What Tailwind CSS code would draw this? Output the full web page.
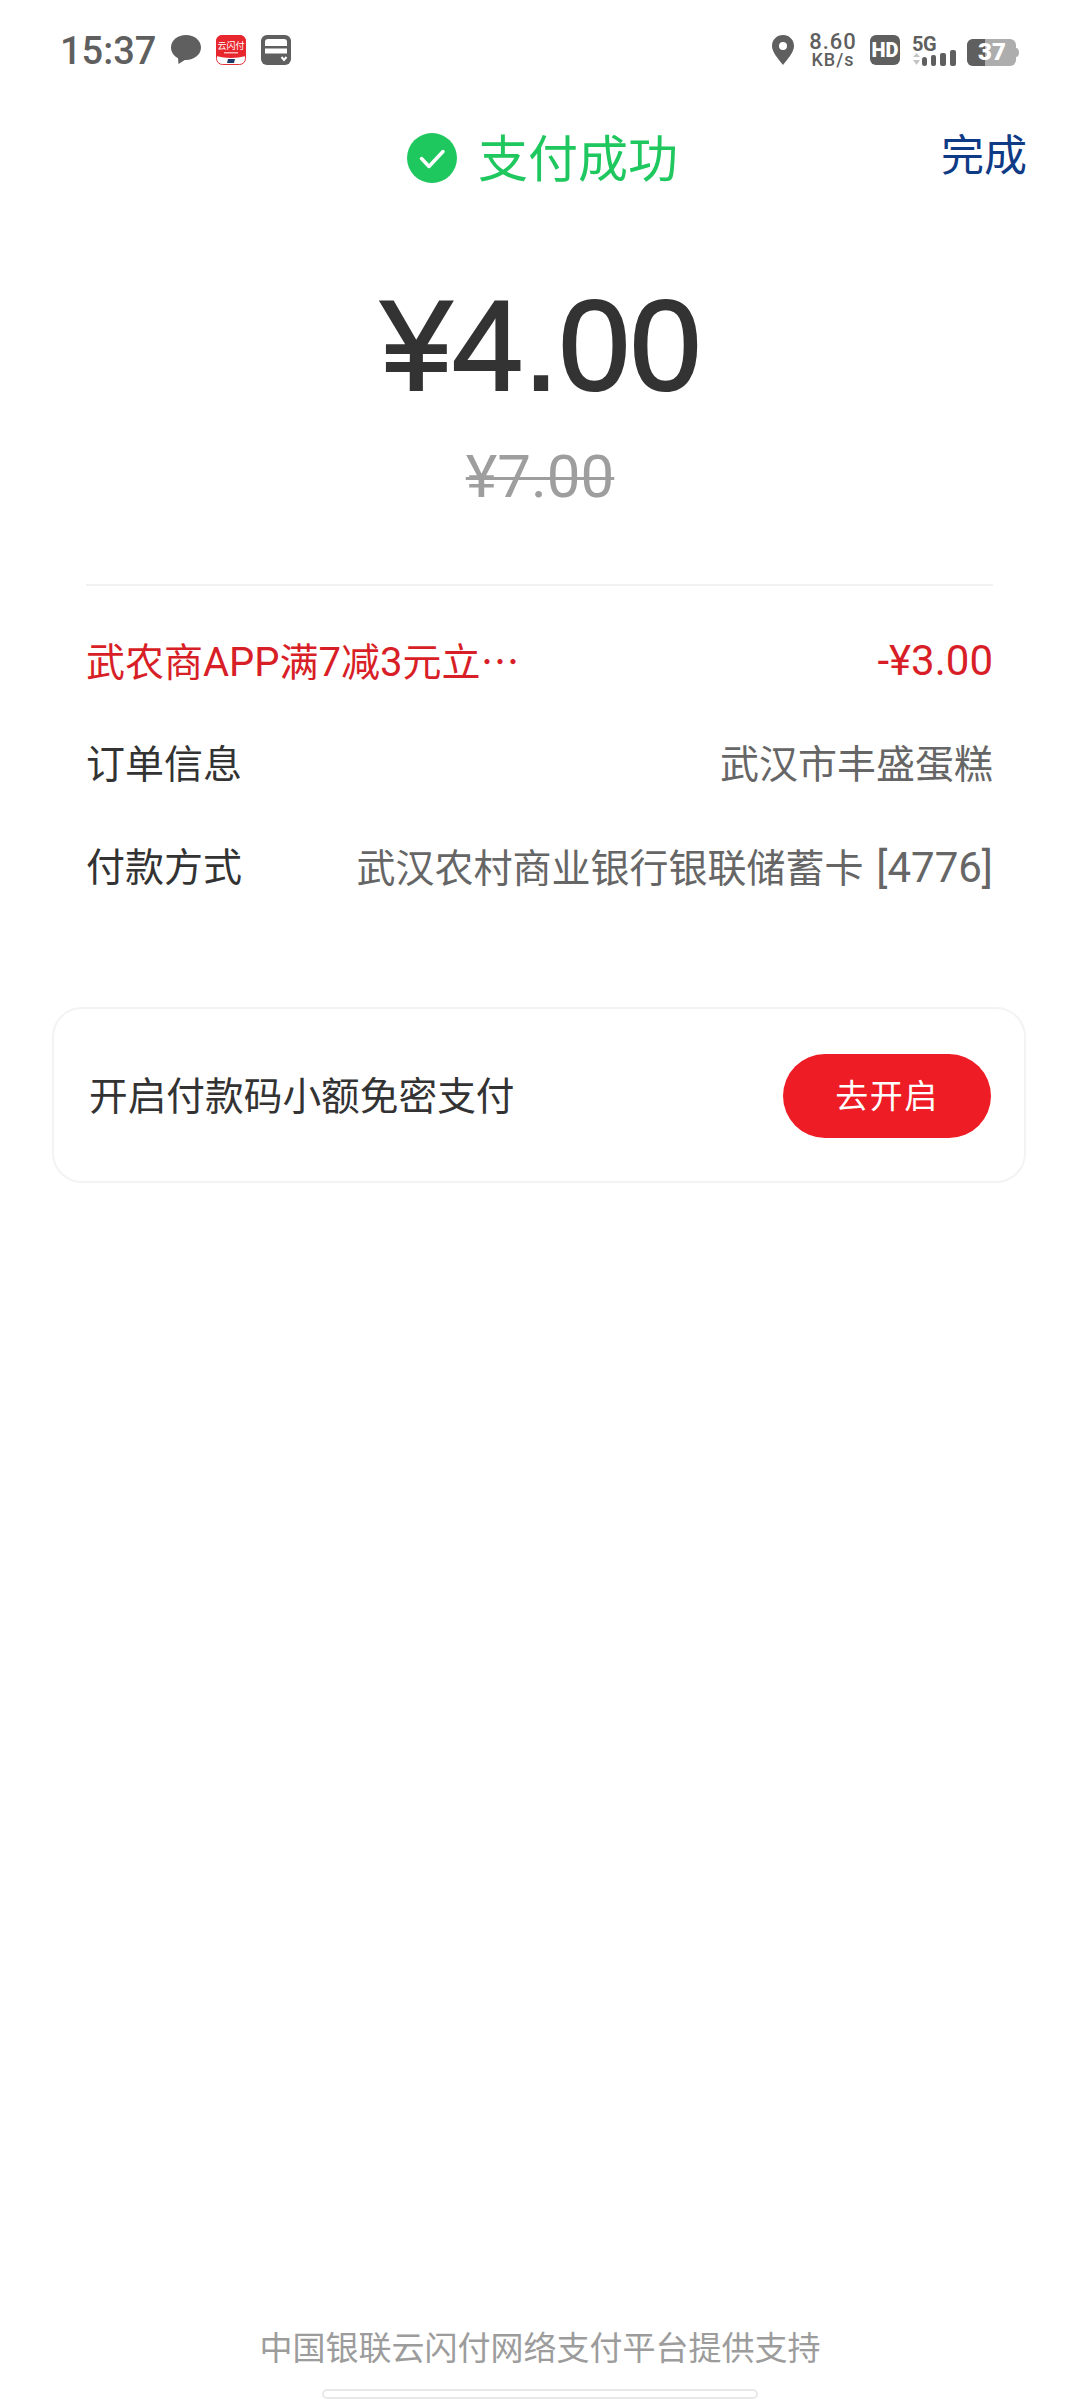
<!DOCTYPE html>
<html lang="zh"><head><meta charset="utf-8">
<script src="https://cdn.jsdelivr.net/npm/@tailwindcss/browser@4"></script>
</head>
<body class="bg-white">
<div class="relative w-[1080px] h-[2400px] bg-white overflow-hidden flex flex-col font-['Roboto','Noto_Sans_CJK_SC',sans-serif]">
  <!-- status bar -->
  <div class="h-[100px] shrink-0 pl-[60px] pr-[61px] flex items-center justify-between text-[#5f5f5f]">
    <div class="flex items-center">
      <span class="text-[38px] leading-none font-medium w-[110px] mt-[2px]">15:37</span>
      <svg class="ml-[1px]" width="30" height="30" viewBox="0 0 30 30"><path d="M15 0C6.700 0 0 5.400 0 12.500c0 4.600 2.800 8.500 7 10.700L7.500 29l6.300-4.100H15c8.300 0 15-5.300 15-12.400S23.300 0 15 0z" fill="#5f5f5f"/></svg>
      <svg class="ml-[15px]" width="30" height="30" viewBox="0 0 30 30">
        <rect x="0.500" y="0.500" width="29" height="29" rx="6" fill="#fff" stroke="#e0303a"/>
        <path d="M0 6a6 6 0 0 1 6-6h18a6 6 0 0 1 6 6v15q-15 4-30 0z" fill="#e8262d"/>
        <text x="15" y="14" text-anchor="middle" font-size="9" fill="#fff" font-family="Noto Sans CJK SC">云闪付</text>
        <rect x="8" y="17" width="14" height="1.500" fill="#ffb4b4"/>
        <path d="M12 24h7l-1 4h-7z" fill="#1f3a68"/>
      </svg>
      <svg class="ml-[15px]" width="30" height="30" viewBox="0 0 30 30">
        <rect width="30" height="30" rx="6" fill="#5f5f5f"/>
        <path d="M4 11V7a3 3 0 0 1 3-3h16a3 3 0 0 1 3 3v4z" fill="#fff"/>
        <rect x="4" y="13.500" width="22" height="5" fill="#fff"/>
        <path d="M20.500 22l2.500 3 2.500-3" fill="none" stroke="#fff" stroke-width="2"/>
      </svg>
    </div>
    <div class="flex items-center">
      <svg width="22" height="30" viewBox="0 0 22 30"><path fill-rule="evenodd" d="M11 0C4.800 0 0 4.700 0 11c0 6.500 6.500 13 11 19 4.500-6 11-12.500 11-19C22 4.700 17.200 0 11 0zm0 7a4 4 0 1 1 0 8 4 4 0 0 1 0-8z" fill="#5f5f5f"/></svg>
      <div class="ml-[14px] w-[50px] flex flex-col items-center text-[#5f5f5f]">
        <span class="text-[22px] leading-[20px] font-medium tracking-[1px] mt-[-1px]">8.60</span>
        <span class="text-[18px] leading-[16px] font-medium tracking-[1px]">KB/s</span>
      </div>
      <div class="ml-[12px] w-[30px] h-[30px] rounded-[6px] bg-[#5f5f5f] flex items-center justify-center text-white text-[20px] leading-none font-black">HD</div>
      <div class="ml-[12px] relative w-[44px] h-[32px]">
        <span class="absolute left-0 top-0 text-[20px] leading-[20px] font-bold tracking-[-0.5px]">5G</span>
        <svg class="absolute left-0 top-0" width="44" height="32" viewBox="0 0 44 32">
          <path d="M1 23l3.500-4 3.500 4z" fill="#c4c4c4"/><path d="M1 26l3.500 5 3.500-5z" fill="#c4c4c4"/>
          <rect x="10" y="23" width="5" height="9" rx="2.500" fill="#5f5f5f"/>
          <rect x="19" y="21" width="5" height="11" rx="2" fill="#5f5f5f"/>
          <rect x="28" y="19" width="6" height="13" rx="2" fill="#5f5f5f"/>
          <rect x="38" y="16" width="6" height="16" rx="2" fill="#5f5f5f"/>
        </svg>
      </div>
      <div class="ml-[11px] relative w-[52px] h-[27px] mt-[4px]">
        <svg class="absolute left-0 top-0" width="52" height="27" viewBox="0 0 52 27">
          <rect width="49" height="27" rx="6" fill="#adadad"/>
          <path d="M6 0h12v27H6a6 6 0 0 1-6-6V6a6 6 0 0 1 6-6z" fill="#5f5f5f"/>
          <path d="M49 9c2 0 3 2 3 4.500s-1 4.500-3 4.500z" fill="#adadad"/>
        </svg>
        <span class="absolute left-[10px] top-0 w-[30px] text-center text-white text-[24px] leading-[27px] font-black">37</span>
      </div>
    </div>
  </div>

  <!-- title -->
  <div class="relative h-[112px] shrink-0">
    <div class="absolute left-[407px] top-[25px] flex items-center">
      <svg width="50" height="50" viewBox="0 0 50 50"><circle cx="25" cy="25" r="25" fill="#1fc75f"/><path d="M14.500 25.500l7.500 8 14-15" fill="none" stroke="#fff" stroke-width="3.500" stroke-linecap="round" stroke-linejoin="round"/></svg>
      <span class="ml-[21px] mb-[6px] text-[50px] leading-[60px] text-[#1fc75f] font-['Noto_Sans_CJK_SC',sans-serif]">支付成功</span>
    </div>
    <span class="absolute left-[941px] top-[31px] text-[43px] leading-[50px] text-[#0f3a85]">完成</span>
  </div>

  <!-- amount -->
  <div class="flex flex-col items-center text-center">
    <div class="h-[126px] ml-[2px] text-[128px] leading-[126px] text-[#333333] mt-[71px] font-['Liberation_Sans',sans-serif] [-webkit-text-stroke:2px_#333333]">¥4.00</div>
    <div class="mt-[35px] h-[66px] text-[60px] leading-[66px] text-[#9e9e9e] line-through decoration-[3px]">¥7.00</div>
  </div>

  <!-- details -->
  <div class="ml-[86px] mr-[87px] mt-[74px] border-t-2 border-[#f1f1f1] pt-[49px] flex flex-col text-[39px] leading-[52px]">
    <div class="flex justify-between items-center h-[52px] text-[#d81e26]"><span>武农商<span class="text-[40px]">APP</span>满<span class="text-[40px]">7</span>减<span class="text-[40px]">3</span>元立<span class="font-['Noto_Sans_CJK_SC',sans-serif]">…</span></span><span class="text-[42px]">-¥3.00</span></div>
    <div class="flex justify-between items-center h-[52px] mt-[52px]"><span class="text-[#333333]">订单信息</span><span class="text-[#666666]">武汉市丰盛蛋糕</span></div>
    <div class="flex justify-between items-center h-[52px] mt-[51px]"><span class="text-[#333333]">付款方式</span><span class="text-[#666666]">武汉农村商业银行银联储蓄卡 <span class="text-[42px] ml-[3px]">[4776]</span></span></div>
  </div>

  <!-- card -->
  <div class="mx-[52px] mt-[113px] h-[176px] w-[974px] border-2 border-[#f3f3f3] rounded-[30px] pl-[35px] pr-[33px] flex items-center justify-between">
    <span class="text-[38.700px] leading-[52px] text-[#333333] mt-[4px]">开启付款码小额免密支付</span>
    <span class="w-[208px] h-[84px] mt-[2px] pt-[2px] rounded-full bg-[#ee1c25] text-white text-[33px] flex items-center justify-center tracking-[1.500px]">去开启</span>
  </div>

  <!-- footer -->
  <div class="mt-auto flex flex-col items-center">
    <span class="text-[33px] leading-[44px] text-[#9c9c9c]">中国银联云闪付网络支付平台提供支持</span>
    <div class="mt-[18px] mb-[1px] w-[436px] h-[10px] rounded-full border-2 border-[#e8e8e8] bg-white"></div>
  </div>
</div>
</body></html>
